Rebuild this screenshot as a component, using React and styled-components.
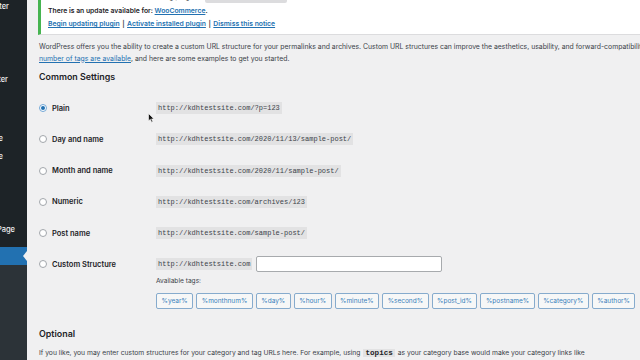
import React from 'react';
import styled, { createGlobalStyle } from 'styled-components';

const Global = createGlobalStyle`
  html, body { margin: 0; padding: 0; width: 640px; height: 360px; overflow: hidden; background: #f0f0f1; }
  body { font-family: Inter, "Noto Sans", sans-serif; }
  #root { height: 360px; }
  * { box-sizing: border-box; }
`;

const Page = styled.div`
  display: flex;
  height: 360px;
  overflow: hidden;
`;

const Sidebar = styled.nav`
  position: relative;
  flex: none;
  width: 27px;
  display: flex;
  flex-direction: column;
  background: #1d2327;
`;

const SideItem = styled.div`
  height: 18px;
  margin-top: ${p => p.$gap}px;
  padding-right: ${p => 27 - p.$end}px;
  display: flex;
  align-items: center;
  justify-content: flex-end;
  overflow: hidden;
  white-space: nowrap;
  color: #f0f0f1;
  font-size: 7.5px;
  font-weight: 500;
`;

const ActiveItem = styled.div`
  position: relative;
  height: 18px;
  margin-top: 9px;
  background: #2271b1;
`;

const ActiveArrow = styled.span`
  position: absolute;
  right: 0;
  top: 50%;
  margin-top: -5px;
  width: 0;
  height: 0;
  border-top: 5px solid transparent;
  border-bottom: 5px solid transparent;
  border-right: 4px solid #f0f0f1;
`;

const Submenu = styled.div`
  flex: 1;
  background: #2c3338;
`;

const Main = styled.main`
  position: relative;
  flex: 1;
  min-width: 0;
  display: flex;
  flex-direction: column;
`;

const Notice = styled.div`
  margin: -16px 0 0 11px;
  padding: 4px 0 4px 7px;
  background: #fff;
  border-left: 3px solid #46b450;
  border-bottom: 1px solid #dcdcde;
`;

const NoticeTop = styled.div`
  height: 16px;
  display: flex;
  align-items: center;
  gap: 4px;
  font-size: 6.8px;
  font-weight: 600;
  color: #1d2327;
  white-space: nowrap;
`;

const NoticePill = styled.span`
  display: inline-block;
  width: 82px;
  height: 14px;
  background: #dcdcde;
  border-radius: 2px;
`;

const NoticeLine = styled.div`
  font-size: 6.8px;
  line-height: 13px;
  font-weight: 600;
  color: #1d2327;
  white-space: nowrap;
`;

const Link = styled.a`
  color: #2271b1;
  text-decoration: underline;
  text-underline-offset: 1px;
`;

const Sep = styled.span`
  color: #3c434a;
  margin: 0 2.5px;
`;

const Para = styled.p`
  margin: ${p => p.$mt}px 0 0 12px;
  font-size: ${p => p.$size}px;
  line-height: 12px;
  color: #3c434a;
  white-space: nowrap;
`;

const Heading = styled.h2`
  margin: ${p => p.$mt}px 0 0 12px;
  font-size: 8.9px;
  line-height: 12px;
  font-weight: 600;
  color: #1d2327;
`;

const FormTable = styled.div`
  margin: 9.9px 0 0 12px;
  display: flex;
  flex-direction: column;
`;

const Row = styled.div`
  display: grid;
  grid-template-columns: 117px auto;
  align-items: start;
  padding: 7.15px 0;
`;

const Th = styled.label`
  height: 17px;
  display: flex;
  align-items: center;
  gap: 5px;
  font-size: 7.5px;
  font-weight: 600;
  color: #1d2327;
  white-space: nowrap;
`;

const Radio = styled.span`
  flex: none;
  width: 8px;
  height: 8px;
  border-radius: 50%;
  background: #fff;
  border: 1px solid ${p => (p.$checked ? '#72a7d6' : '#a2a6ab')};
  display: flex;
  align-items: center;
  justify-content: center;
  &::after {
    content: '';
    display: ${p => (p.$checked ? 'block' : 'none')};
    width: 4px;
    height: 4px;
    border-radius: 50%;
    background: #2271b1;
  }
`;

const Td = styled.div`
  display: flex;
  flex-direction: column;
  align-items: flex-start;
`;

const InputLine = styled.div`
  height: 17px;
  display: flex;
  align-items: center;
  gap: 3.5px;
`;

const Code = styled.code`
  font-family: "Liberation Mono", "DejaVu Sans Mono", monospace;
  font-size: 7px;
  line-height: 12px;
  padding: 0 2px;
  background: #e2e2e3;
  color: #3c434a;
  white-space: nowrap;
`;

const InlineCode = styled(Code)`
  margin: 0 3px;
  font-size: 7.6px;
  font-weight: 700;
  color: #1d2327;
`;

const TextInput = styled.span`
  display: block;
  width: 186px;
  height: 16px;
  background: #fff;
  border: 1px solid #a7aaad;
  border-radius: 2px;
`;

const TagsLabel = styled.div`
  margin-top: 3px;
  font-size: 6.6px;
  line-height: 10px;
  color: #3c434a;
`;

const TagList = styled.div`
  margin-top: 7px;
  display: flex;
  gap: 3px;
  flex-wrap: nowrap;
`;

const TagButton = styled.span`
  flex: none;
  height: 16px;
  padding: 0 4.5px;
  display: flex;
  align-items: center;
  font-size: 6.5px;
  color: #3a7fbb;
  background: #f6f7f7;
  border: 1px solid #86abcd;
  border-radius: 2px;
  white-space: nowrap;
`;

const Cursor = styled.svg`
  position: absolute;
  left: 121px;
  top: 113px;
`;

const sideItems = [
  { label: 'Newsletter', gap: -3, end: 9 },
  { label: 'Twitter', gap: 55, end: 8 },
  { label: 'Theme', gap: 41, end: 3 },
  { label: 'Code', gap: 0, end: 3 },
  { label: 'Landing Page', gap: 55, end: 15 },
];

const options = [
  { label: 'Plain', code: 'http://kdhtestsite.com/?p=123', checked: true },
  { label: 'Day and name', code: 'http://kdhtestsite.com/2020/11/13/sample-post/' },
  { label: 'Month and name', code: 'http://kdhtestsite.com/2020/11/sample-post/' },
  { label: 'Numeric', code: 'http://kdhtestsite.com/archives/123' },
  { label: 'Post name', code: 'http://kdhtestsite.com/sample-post/' },
];

const tags = ['%year%', '%monthnum%', '%day%', '%hour%', '%minute%', '%second%', '%post_id%', '%postname%', '%category%', '%author%'];

export default function App() {
  return (
    <>
      <Global />
      <Page>
        <Sidebar>
          {sideItems.map(item => (
            <SideItem key={item.label} $gap={item.gap} $end={item.end}>{item.label}</SideItem>
          ))}
          <ActiveItem>
            <ActiveArrow />
          </ActiveItem>
          <Submenu />
        </Sidebar>
        <Main>
          <Notice>
            <NoticeTop>
              This theme recommends the following plugins: <NoticePill />
            </NoticeTop>
            <NoticeLine>
              There is an update available for: <Link>WooCommerce</Link>.
            </NoticeLine>
            <NoticeLine>
              <Link>Begin updating plugin</Link>
              <Sep>|</Sep>
              <Link>Activate installed plugin</Link>
              <Sep>|</Sep>
              <Link>Dismiss this notice</Link>
            </NoticeLine>
          </Notice>
          <Para $mt={5.5} $size={6.87}>
            WordPress offers you the ability to create a custom URL structure for your permalinks and archives. Custom URL structures can improve the aesthetics, usability, and forward-compatibility of your links. A
            <br />
            <Link>number of tags are available</Link>, and here are some examples to get you started.
          </Para>
          <Heading $mt={6}>Common Settings</Heading>
          <FormTable>
            {options.map(o => (
              <Row key={o.label}>
                <Th>
                  <Radio $checked={o.checked} />
                  {o.label}
                </Th>
                <Td>
                  <InputLine>
                    <Code>{o.code}</Code>
                  </InputLine>
                </Td>
              </Row>
            ))}
            <Row>
              <Th>
                <Radio />
                Custom Structure
              </Th>
              <Td>
                <InputLine>
                  <Code>http://kdhtestsite.com</Code>
                  <TextInput />
                </InputLine>
                <TagsLabel>Available tags:</TagsLabel>
                <TagList>
                  {tags.map(t => (
                    <TagButton key={t}>{t}</TagButton>
                  ))}
                </TagList>
              </Td>
            </Row>
          </FormTable>
          <Heading $mt={12}>Optional</Heading>
          <Para $mt={6.7} $size={6.75}>
            If you like, you may enter custom structures for your category and tag URLs here. For example, using
            <InlineCode>topics</InlineCode>
            as your category base would make your category links like
            <br />
            <Code>http://kdhtestsite.com/topics/uncategorized/</Code>. If you leave these blank the defaults will be used.
          </Para>
          <Cursor width="7" height="10" viewBox="0 0 7 10">
            <path d="M0.5 0.5 L0.5 8 L2.3 6.3 L3.6 9.2 L4.8 8.7 L3.6 5.9 L6 5.9 Z" fill="#111" stroke="#fff" strokeWidth="0.6" />
          </Cursor>
        </Main>
      </Page>
    </>
  );
}
